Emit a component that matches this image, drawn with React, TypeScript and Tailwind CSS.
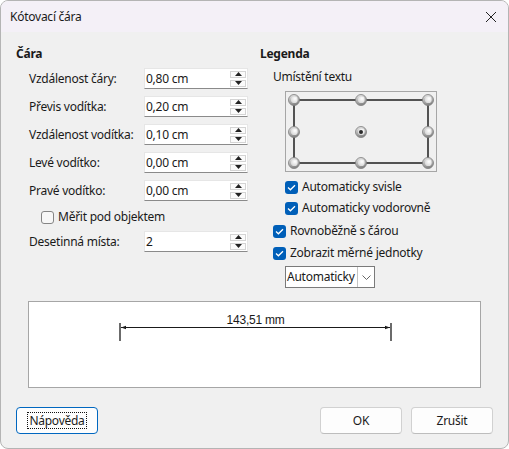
import React from "react";

const ui = "font-['Noto_Sans',sans-serif] text-[12px] leading-[16px] tracking-[-0.25px] text-[#1a1a1a]";

function SpinField({ value }: { value: string }) {
  return (
    <div className="w-[104px] h-[21px] bg-white border border-[#e6e6e6] border-b-[#8a8a8a] flex items-center">
      <span className="flex-1 pl-[1px] whitespace-nowrap">{value}</span>
      <div className="flex flex-col gap-[2px] mr-[1px]">
        <div className="w-[16px] h-[7px] border border-[#d4d4d4] bg-[#fbfbfb] flex items-center justify-center">
          <svg width="7" height="4" viewBox="0 0 7 4">
            <path d="M0 4 L3.5 0 L7 4 Z" fill="#222" />
          </svg>
        </div>
        <div className="w-[16px] h-[7px] border border-[#d4d4d4] bg-[#fbfbfb] flex items-center justify-center">
          <svg width="7" height="4" viewBox="0 0 7 4">
            <path d="M0 0 L3.5 4 L7 0 Z" fill="#222" />
          </svg>
        </div>
      </div>
    </div>
  );
}

function FieldRow({ label, value }: { label: string; value: string }) {
  return (
    <div className="flex items-center h-[21px]">
      <span className="w-[128px] pl-[13px] whitespace-nowrap">{label}</span>
      <SpinField value={value} />
    </div>
  );
}

function CheckBox({ checked }: { checked: boolean }) {
  if (!checked) {
    return <div className="w-[13px] h-[13px] rounded-[3px] border border-[#858585] bg-[#f7f7f7] shrink-0" />;
  }
  return (
    <div className="w-[13px] h-[13px] rounded-[3px] bg-[#005fb8] flex items-center justify-center shrink-0">
      <svg width="9" height="7" viewBox="0 0 9 7">
        <path d="M1 3.6 L3.4 5.8 L8 1.2" fill="none" stroke="#fff" strokeWidth="1.3" />
      </svg>
    </div>
  );
}

function CheckRow({ label, checked, className }: { label: string; checked: boolean; className: string }) {
  return (
    <div className={"flex items-center gap-[4px] h-[16px] " + className}>
      <CheckBox checked={checked} />
      <span className="whitespace-nowrap">{label}</span>
    </div>
  );
}

function Knob({ cx, cy, selected }: { cx: number; cy: number; selected?: boolean }) {
  return (
    <g>
      <circle cx={cx} cy={cy} r="5.5" fill="url(#knobShade)" stroke="#7c7c7c" strokeWidth="0.8" />
      <circle cx={cx + 0.3} cy={cy - 0.3} r="3.4" fill="url(#knobFace)" />
      {selected && <circle cx={cx} cy={cy} r="2" fill="#2a2a2a" />}
    </g>
  );
}

function PositionPicker() {
  const xs = [8, 75, 142];
  const ys = [8, 40, 71];
  return (
    <div className="w-[152px] h-[81px] border border-[#a6a6a6] ml-[25px] mt-[6px]">
      <svg width="150" height="79" viewBox="0 0 150 79">
        <defs>
          <linearGradient id="knobShade" x1="0" y1="0" x2="0.3" y2="1">
            <stop offset="0" stopColor="#eeeeee" />
            <stop offset="1" stopColor="#868686" />
          </linearGradient>
          <radialGradient id="knobFace" cx="0.6" cy="0.35" r="0.8">
            <stop offset="0" stopColor="#ffffff" />
            <stop offset="1" stopColor="#cfcfcf" />
          </radialGradient>
        </defs>
        <rect x="8" y="8" width="134" height="63" fill="none" stroke="#111" strokeWidth="1.4" />
        {ys.map((y, r) =>
          xs.map((x, c) => <Knob key={r + "-" + c} cx={x} cy={y} selected={r === 1 && c === 1} />)
        )}
      </svg>
    </div>
  );
}

function Preview() {
  return (
    <div className="mx-[12px] mt-[13px] h-[87px] bg-white border border-[#a6a6a6]">
      <svg width="452" height="85" viewBox="0 0 452 85">
        <line x1="91" y1="21" x2="91" y2="39" stroke="#6b6b6b" strokeWidth="2" />
        <line x1="362" y1="21" x2="362" y2="39" stroke="#6b6b6b" strokeWidth="2" />
        <line x1="92" y1="25.5" x2="361" y2="25.5" stroke="#1a1a1a" strokeWidth="1" />
        <path d="M92 25.5 L97 23.8 L97 27.2 Z" fill="#1a1a1a" />
        <path d="M361 25.5 L356 23.8 L356 27.2 Z" fill="#1a1a1a" />
        <text
          x="226.5"
          y="22"
          textAnchor="middle"
          fontFamily="'Liberation Sans', Arial, sans-serif"
          fontSize="12"
          fill="#1a1a1a"
        >
          143,51 mm
        </text>
      </svg>
    </div>
  );
}

function DialogButton({ children, focused }: { children: React.ReactNode; focused?: boolean }) {
  return (
    <button
      className={
        "w-[82px] h-[27px] rounded-[4px] bg-[#fdfdfd] flex items-center justify-center " +
        (focused ? "border border-[#0067c0]" : "border border-[#d1d1d1] border-b-[#bdbdbd]")
      }
    >
      {focused ? (
        <span className="border border-dotted border-[#111] px-[1px] leading-[15px]">{children}</span>
      ) : (
        <span>{children}</span>
      )}
    </button>
  );
}

export default function App() {
  return (
    <div className={"w-[509px] h-[449px] rounded-[8px] border border-[#b4b4b4] overflow-hidden flex flex-col bg-[#f0f0f0] " + ui}>
      {/* title bar */}
      <div className="h-[31px] shrink-0 bg-[#f4f0f7] flex items-center justify-between pl-[9px] pr-[11px]">
        <span>Kótovací čára</span>
        <svg width="12" height="12" viewBox="0 0 12 12">
          <path d="M1 1 L11 11 M11 1 L1 11" stroke="#222" strokeWidth="1" />
        </svg>
      </div>

      <div className="flex-1 flex flex-col px-[15px]">
        <div className="flex items-start pt-[14px]">
          {/* dimension line settings */}
          <div className="w-[232px] flex flex-col">
            <div className="font-bold">Čára</div>
            <div className="flex flex-col gap-[7px] mt-[6px]">
              <FieldRow label="Vzdálenost čáry:" value="0,80 cm" />
              <FieldRow label="Převis vodítka:" value="0,20 cm" />
              <FieldRow label="Vzdálenost vodítka:" value="0,10 cm" />
              <FieldRow label="Levé vodítko:" value="0,00 cm" />
              <FieldRow label="Pravé vodítko:" value="0,00 cm" />
            </div>
            <CheckRow label="Měřit pod objektem" checked={false} className="ml-[25px] mt-[8px]" />
            <div className="mt-[6px]">
              <FieldRow label="Desetinná místa:" value="2" />
            </div>
          </div>

          {/* legend settings */}
          <div className="ml-[12px] flex flex-col">
            <div className="font-bold">Legenda</div>
            <div className="ml-[13px] mt-[7px]">Umístění textu</div>
            <PositionPicker />
            <CheckRow label="Automaticky svisle" checked className="ml-[25px] mt-[7px]" />
            <CheckRow label="Automaticky vodorovně" checked className="ml-[25px] mt-[5px]" />
            <CheckRow label="Rovnoběžně s čárou" checked className="ml-[13px] mt-[7px]" />
            <CheckRow label="Zobrazit měrné jednotky" checked className="ml-[13px] mt-[6px]" />
            <div className="ml-[25px] mt-[5px] w-[90px] h-[22px] bg-white border border-[#7a7a7a] flex items-center">
              <span className="flex-1 pl-[1px] whitespace-nowrap">Automaticky</span>
              <div className="w-[17px] h-full border-l border-[#c4c4c4] flex items-center justify-center">
                <svg width="9" height="5" viewBox="0 0 9 5">
                  <path d="M0.5 0.5 L4.5 4.5 L8.5 0.5" fill="none" stroke="#666" strokeWidth="1" />
                </svg>
              </div>
            </div>
          </div>
        </div>

        <Preview />

        <div className="mt-[19px] flex items-center">
          <DialogButton focused>Nápověda</DialogButton>
          <div className="flex-1" />
          <div className="flex gap-[9px]">
            <DialogButton>OK</DialogButton>
            <DialogButton>Zrušit</DialogButton>
          </div>
        </div>
      </div>
    </div>
  );
}
